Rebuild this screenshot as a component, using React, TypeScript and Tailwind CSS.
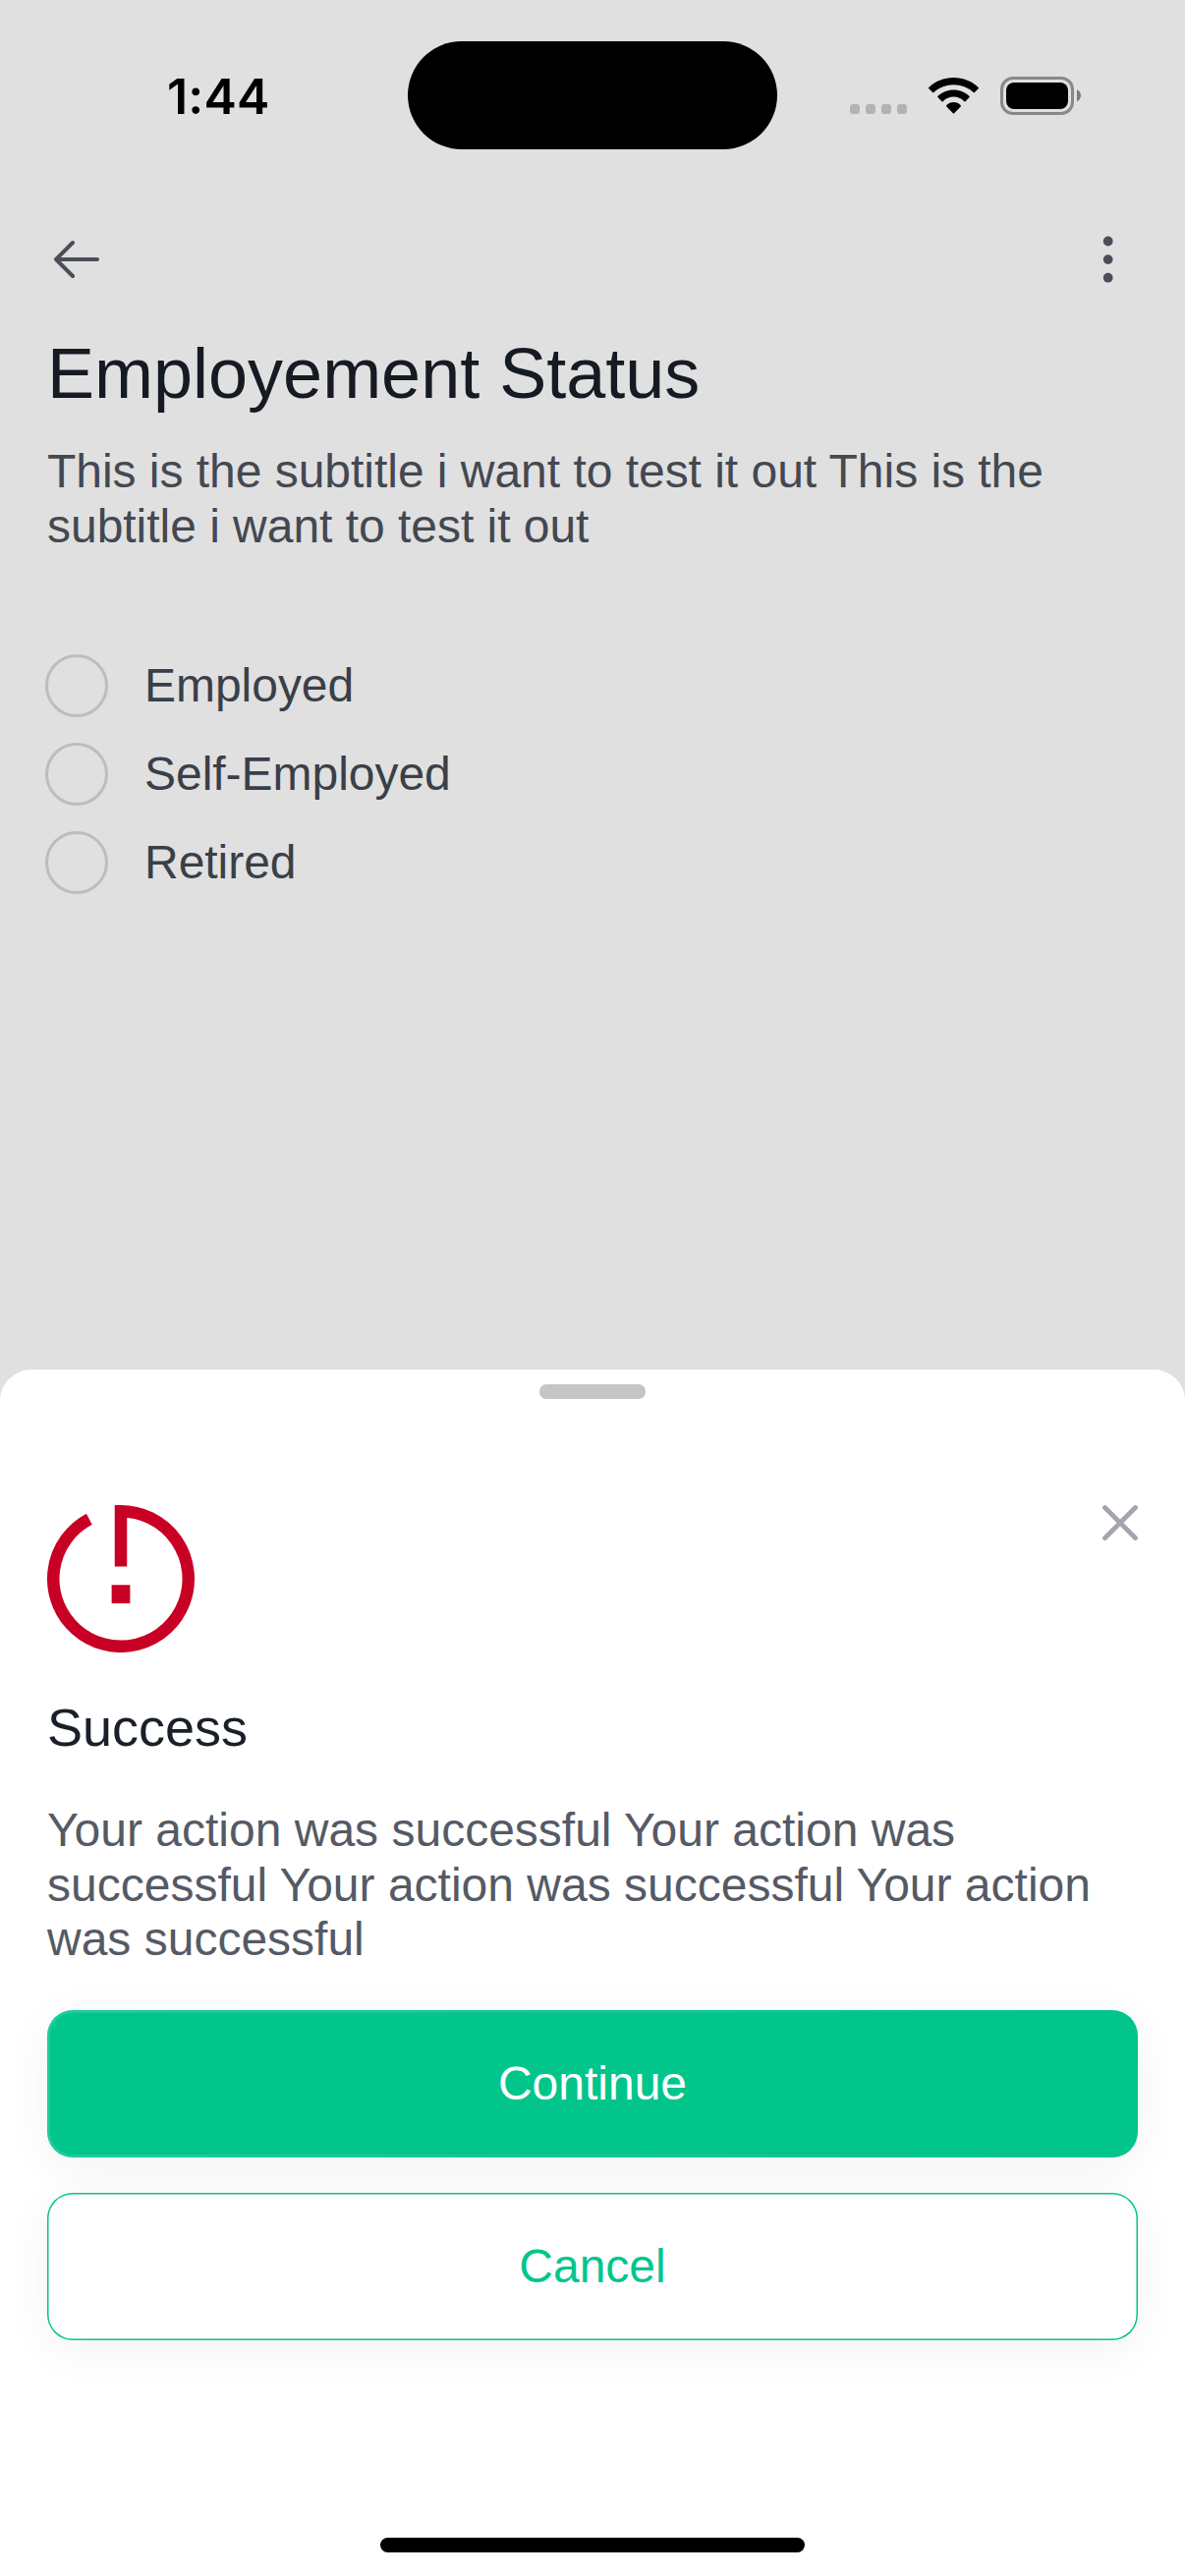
const options = ["Employed", "Self-Employed", "Retired"];

function StatusBar() {
  return (
    <header className="relative flex h-[194px] shrink-0 items-start justify-between">
      <time className="ml-[170px] mt-[68px] font-['Inter'] text-[50px] font-semibold leading-[60px] tracking-[0.2px] text-black">
        1:44
      </time>
      <div className="absolute left-[415px] top-[42px] h-[110px] w-[376px] rounded-[55px] bg-black" />
      <div className="mr-[106px] mt-[78px] flex h-[39px] items-start">
        <div className="mt-[28px] flex gap-[6px]">
          {[0, 1, 2, 3].map((i) => (
            <span key={i} className="size-[10px] rounded-[3px] bg-[#b3b3b3]" />
          ))}
        </div>
        <svg className="ml-[22px] mt-px h-[37px] w-[51px]" viewBox="0 0 51 37" fill="black">
          <path d="M25.500 0C35.400 0 44.300 3.800 50.700 10Q51.300 10.600 50.700 11.200L46.900 15Q46.300 15.600 45.700 15Q37 7.200 25.500 7.200T5.300 15Q4.700 15.600 4.100 15L0.300 11.200Q-0.300 10.600 0.300 10C6.700 3.800 15.600 0 25.500 0Z" />
          <path d="M25.500 12.400C31.900 12.400 37.500 14.900 41.600 18.900Q42.200 19.500 41.600 20.100L37.500 24.200Q36.900 24.800 36.300 24.200Q31.700 19.600 25.500 19.600T14.700 24.200Q14.100 24.800 13.500 24.200L9.400 20.100Q8.800 19.500 9.400 18.900C13.500 14.900 19.100 12.400 25.500 12.400Z" />
          <path d="M25.500 25C28.300 25 30.800 26.200 32.700 28.200Q33.300 28.900 32.700 29.500L26.100 36.300Q25.500 36.900 24.900 36.300L18.300 29.500Q17.700 28.900 18.300 28.200C20.200 26.200 22.700 25 25.500 25Z" />
        </svg>
        <svg className="ml-[22px] h-[39px] w-[82px]" viewBox="0 0 82 39">
          <rect x="1.500" y="1.500" width="72" height="36" rx="11.500" fill="none" stroke="#888" strokeWidth="3" />
          <rect x="6" y="6" width="63" height="27" rx="8" fill="black" />
          <path d="M78 13.200C80.500 14.200 82 16.800 82 19.300S80.500 24.400 78 25.400Z" fill="#7c7c7c" />
        </svg>
      </div>
    </header>
  );
}

function EmploymentForm() {
  return (
    <main className="flex flex-col">
      <nav className="flex h-[144px] items-center justify-between pl-[54px] pr-[72px]">
        <svg className="mb-[4px] h-[40px] w-[48px]" viewBox="0 0 48 40" fill="none" stroke="#494e57" strokeWidth="4" strokeLinecap="round" strokeLinejoin="round">
          <path d="M45 20H3M20 3L3 20L20 37" />
        </svg>
        <svg className="mb-[4px] h-[48px] w-[12px]" viewBox="0 0 12 48" fill="#494e57">
          <circle cx="5.700" cy="5.500" r="4.900" />
          <circle cx="5.700" cy="24.100" r="4.900" />
          <circle cx="5.700" cy="42.700" r="4.900" />
        </svg>
      </nav>
      <h1 className="px-[48px] text-[72px] leading-[84px] text-[#151a23]">Employement Status</h1>
      <p className="mt-[30px] px-[48px] text-[48px] leading-[56px] tracking-[-0.03px] text-[#444851]">
        This is the subtitle i want to test it out This is the
        <br />
        subtitle i want to test it out
      </p>
      <ul className="mt-[89px] pl-[46px]">
        {options.map((label) => (
          <li key={label} className="flex h-[90px] items-center gap-[37px]">
            <span className="size-[64px] rounded-full border-3 border-[#bcbdc1]" />
            <span className="text-[48px] leading-[56px] tracking-[-0.03px] text-[#3a3f48]">{label}</span>
          </li>
        ))}
      </ul>
    </main>
  );
}

function ConfirmationSheet() {
  return (
    <section className="absolute inset-x-0 bottom-0 flex h-[1228px] flex-col rounded-t-[32px] bg-white pt-[15px]">
      <div className="h-[15px] w-[108px] self-center rounded-[7px] bg-[#c5c5c6]" />
      <div className="mt-[108px] flex items-start justify-between px-[48px]">
        <svg className="size-[150px]" viewBox="0 0 24 24" fill="none" stroke="#c80024" strokeWidth="2">
          <path d="M12 10V1A11 11 0 1 1 6.850 2.280" />
          <rect x="10.500" y="13" width="3" height="3" fill="#c80024" stroke="none" />
        </svg>
        <svg className="size-[36px]" viewBox="0 0 36 36" fill="none" stroke="#a3a6ae" strokeWidth="4.800" strokeLinecap="round">
          <path d="M2.500 2.500L33.500 33.500M33.500 2.500L2.500 33.500" />
        </svg>
      </div>
      <h2 className="mt-[44px] px-[48px] text-[54px] leading-[64px] text-[#19202a]">Success</h2>
      <p className="mt-[45px] px-[48px] text-[48px] leading-[55.500px] text-[#555a65]">
        Your action was successful Your action was
        <br />
        successful Your action was successful Your action
        <br />
        was successful
      </p>
      <div className="mt-[44.500px] flex flex-col gap-[36px] px-[48px] text-[48px] leading-[56px]">
        <button className="relative h-[150px] rounded-[26px] bg-[#02c58c] text-white shadow-[0_9px_48px_rgba(0,0,0,0.055)]">
          <span className="absolute inset-0 rounded-[26px] border-3 border-white/12 [mask-image:linear-gradient(to_right,black,transparent)]" />
          Continue
        </button>
        <button className="relative h-[150px] rounded-[26px] bg-white text-[#02c58c] shadow-[0_9px_48px_rgba(0,0,0,0.055),inset_0_0_0_1.500px_#02c58c]">
          Cancel
        </button>
      </div>
      <div className="mb-[24px] mt-auto h-[15px] w-[432px] self-center rounded-full bg-black" />
    </section>
  );
}

export default function App() {
  return (
    <div className="relative flex h-[2622px] w-[1206px] flex-col overflow-hidden bg-[#e0e0e0] font-['Liberation_Sans',sans-serif]">
      <StatusBar />
      <EmploymentForm />
      <ConfirmationSheet />
    </div>
  );
}
